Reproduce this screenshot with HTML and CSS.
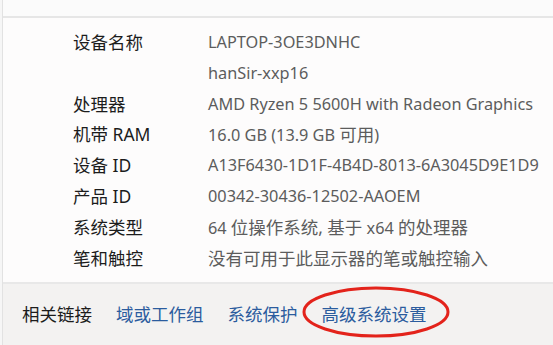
FILE: index.html
```html
<!DOCTYPE html>
<html lang="zh-CN">
<head>
<meta charset="utf-8">
<title>设备规格</title>
<link rel="stylesheet" href="styles.css">
</head>
<body>
<div class="frame">
  <div class="top-strip"></div>
  <section class="specs">
    <div class="row"><span class="label">设备名称</span><span class="value">LAPTOP-3OE3DNHC</span></div>
    <div class="row"><span class="label"></span><span class="value">hanSir-xxp16</span></div>
    <div class="row"><span class="label">处理器</span><span class="value">AMD Ryzen 5 5600H with Radeon Graphics</span></div>
    <div class="row"><span class="label">机带 RAM</span><span class="value">16.0 GB (13.9 GB <span class="zh">可用</span>)</span></div>
    <div class="row"><span class="label">设备 ID</span><span class="value">A13F6430-1D1F-4B4D-8013-6A3045D9E1D9</span></div>
    <div class="row"><span class="label">产品 ID</span><span class="value">00342-30436-12502-AAOEM</span></div>
    <div class="row"><span class="label">系统类型</span><span class="value">64 <span class="zh">位操作系统,</span> <span class="zh">基于</span> x64 <span class="zh">的处理器</span></span></div>
    <div class="row"><span class="label">笔和触控</span><span class="value"><span class="zh">没有可用于此显示器的笔或触控输入</span></span></div>
  </section>
  <footer class="links">
    <span class="links-title">相关链接</span>
    <a class="link">域或工作组</a>
    <a class="link">系统保护</a>
    <a class="link link-marked">高级系统设置
      <svg class="mark" width="152" height="56" viewBox="0 0 152 56"><ellipse cx="76" cy="28" rx="72" ry="24" fill="none" stroke="#e3231b" stroke-width="3"/></svg>
    </a>
  </footer>
</div>
</body>
</html>
```

FILE: styles.css
```css
html, body {
  margin: 0;
  padding: 0;
  width: 553px;
  height: 345px;
  overflow: hidden;
  background: #f6f6f6;
}

.frame {
  box-sizing: border-box;
  margin-left: 2px;
  height: 345px;
  border-left: 1px solid #e2e2e2;
  display: flex;
  flex-direction: column;
  font-family: "Noto Sans", "Noto Sans CJK SC", sans-serif;
}

.top-strip {
  height: 16px;
  background: #fbfbfb;
  border-bottom: 2px solid #e6e6e6;
  flex: none;
}

.specs {
  flex: none;
  height: 266px;
  box-sizing: border-box;
  background: #fdfcfc;
  padding: 9px 0 0 70px;
  border-bottom: 2px solid #e8e8e8;
}

.row {
  display: flex;
  height: 30.8px;
  line-height: 30.8px;
  font-size: 17.5px;
  white-space: nowrap;
}

.label {
  width: 135px;
  flex: none;
  color: #1c1c1c;
}

.value {
  color: #5c5c5c;
  font-size: 16.3px;
}

.zh {
  font-size: 17.5px;
}

.links {
  flex: 1;
  background: #f3f2f1;
  display: flex;
  align-items: center;
  gap: 24px;
  padding: 0 0 2px 19px;
  font-size: 17.5px;
}

.links-title {
  color: #1c1c1c;
}

.link {
  color: #2b5c9e;
  position: relative;
}

.mark {
  position: absolute;
  left: -22px;
  top: -17px;
}
```
